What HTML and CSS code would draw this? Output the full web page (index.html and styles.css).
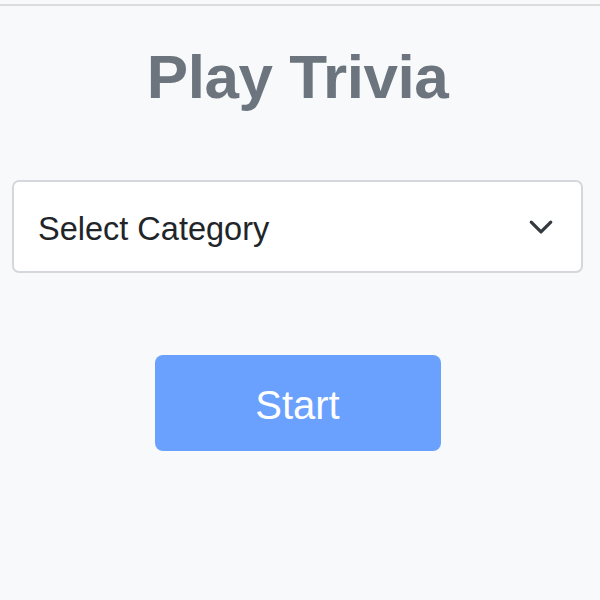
FILE: index.html
```html
<!DOCTYPE html>
<html lang="en">
<head>
<meta charset="utf-8">
<title>Play Trivia</title>
<link rel="stylesheet" href="styles.css">
</head>
<body>
<div class="topbar"></div>
<main class="main">
  <h1 class="title">Play Trivia</h1>
  <div class="select">
    <span class="select-text">Select Category</span>
    <svg class="chevron" viewBox="0 0 16 16" width="26" height="26" aria-hidden="true">
      <path d="m2 5 6 6 6-6" fill="none" stroke="#343a40" stroke-width="2" stroke-linecap="round" stroke-linejoin="round"/>
    </svg>
  </div>
  <div class="actions">
    <button class="start" type="button">Start</button>
  </div>
</main>
</body>
</html>
```
FILE: styles.css
```css
html, body {
  margin: 0;
  padding: 0;
  background: #f8f9fa;
  font-family: "Liberation Sans", Arial, sans-serif;
}

.topbar {
  margin-top: 4px;
  height: 2px;
  background: #dcdcdc;
}

.main {
  padding: 0 17px 0 12px;
}

.title {
  margin: 34px 0 0;
  text-align: center;
  font-size: 62px;
  line-height: 1.2;
  font-weight: 700;
  color: #6c757d;
  letter-spacing: -0.5px;
}

.select {
  margin-top: 66px;
  height: 89px;
  background: #fff;
  border: 2px solid #d4d8dd;
  border-radius: 7px;
  display: flex;
  align-items: center;
  justify-content: space-between;
  padding: 0 27px 0 24px;
}

.select-text {
  font-size: 32.5px;
  color: #212529;
  margin-top: 6px;
}

.chevron {
  display: block;
}

.actions {
  display: flex;
  justify-content: center;
  margin-top: 82px;
}

.start {
  width: 286px;
  height: 96px;
  border: none;
  border-radius: 8px;
  background: #6aa1fe;
  color: #fff;
  font-family: "Liberation Sans", Arial, sans-serif;
  font-size: 40px;
  padding: 4px 0 0;
}
```
